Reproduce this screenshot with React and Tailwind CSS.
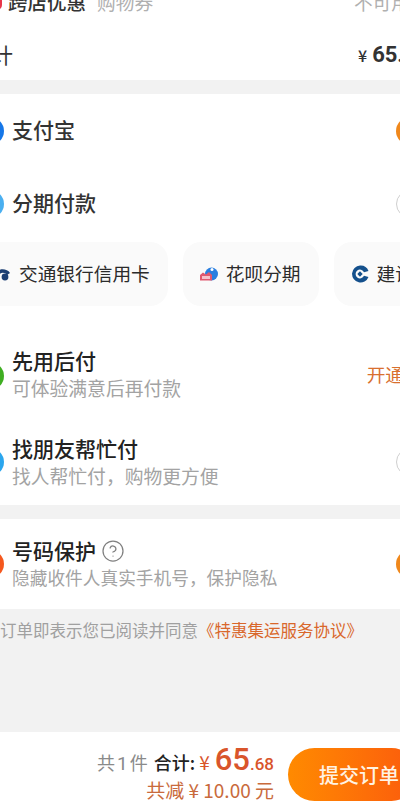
import { CircleHelp } from 'lucide-react'

const cjk = { fontFamily: '"Noto Sans CJK SC", "Noto Sans", sans-serif' }

function Dot({ className }) {
  return <div className={`w-[28px] h-[28px] rounded-full shrink-0 ${className}`} />
}

function Radio({ on }) {
  if (on) return <div className="w-[28px] h-[28px] rounded-full shrink-0 bg-[#f0881c]" />
  return <div className="w-[28px] h-[28px] rounded-full shrink-0 border-[1.5px] border-[#cfcfcf]" />
}

function PayRow({ icon, title }) {
  return (
    <div className="h-[73px] flex items-center gap-2">
      {icon}
      <div className="flex-1 -mt-[4px] text-[21px] leading-[28px] font-medium text-[#333]">{title}</div>
      <Radio on={title === '支付宝'} />
    </div>
  )
}

function DescRow({ icon, title, desc, right, height = 'h-[87px]', lift = '', descSize = 'text-[18.8px]' }) {
  return (
    <div className={`${height} flex items-center gap-2`}>
      {icon}
      <div className={`flex-1 ${lift}`}>
        <div className="flex items-center gap-[5px] text-[21px] leading-[27px] font-medium text-[#222]">
          {title}
          {title === '号码保护' && <CircleHelp size={24} strokeWidth={1.25} className="text-[#808080]" />}
        </div>
        <div className={`${descSize} leading-[27px] text-[#a3a3a3]`}>{desc}</div>
      </div>
      {right}
    </div>
  )
}

function Chip({ icon, label }) {
  return (
    <div className="h-[64px] rounded-[18px] bg-[#fafafa] flex items-center gap-2 pl-[17px] pr-[18px] shrink-0">
      {icon}
      <span className="-mt-[2px] text-[18.7px] text-[#2b2b2b] whitespace-nowrap">{label}</span>
    </div>
  )
}

function BocomIcon() {
  return (
    <svg width="18" height="18" viewBox="0 0 18 18" className="shrink-0">
      <path d="M2 9 C4 3 14 3 17 8 L14 10 C12 7 7 7 5 11 Z" fill="#1c3f73" />
      <circle cx="12" cy="12" r="3.4" fill="#1c3f73" />
    </svg>
  )
}

function HuabeiIcon() {
  return (
    <svg width="18" height="18" viewBox="0 0 18 18" className="shrink-0">
      <circle cx="11.5" cy="9" r="6.5" fill="#2a7fe0" />
      <circle cx="12" cy="4.5" r="1.5" fill="#fff" />
      <path d="M0 10 L3 7.5 L6 9.5 L9 7 L12 10 V15.5 H0 Z" fill="#e0596f" />
      <rect x="2" y="11" width="8" height="3" fill="#f6c3cc" />
    </svg>
  )
}

function CcbIcon() {
  return (
    <svg width="18" height="18" viewBox="0 0 18 18" className="shrink-0">
      <path d="M9 0.5 A8.5 8.5 0 1 0 17.5 12 L13 10.8 A4.4 4.4 0 1 1 13 7.2 L17.5 6 A8.5 8.5 0 0 0 9 0.5 Z" fill="#14508c" />
      <path d="M9 6.3 L11.7 9 L9 11.7 L6.3 9 Z" fill="#14508c" />
    </svg>
  )
}

export default function App() {
  return (
    <div className="w-[400px] h-[806px] overflow-hidden bg-[#f2f2f2] flex flex-col" style={cjk}>
      <div className="w-[448px] -ml-[24px] flex-1 flex flex-col">
        {/* order summary, cut off by the top of the screen */}
        <div className="bg-white -mt-[23px]">
          <div className="h-[52px] flex items-center">
            <div className="ml-[16px] w-[10px] h-[14px] rounded-full bg-[#e8364a] shrink-0" />
            <span className="ml-[6px] -mt-[2px] text-[19.5px] font-medium text-[#333]">跨店优惠</span>
            <span className="ml-[11px] -mt-[2px] text-[18.7px] text-[#b0b0b0]">购物券</span>
            <span className="ml-auto -mt-[2px] pr-[14px] text-[18.7px] text-[#b0b0b0]">不可用</span>
          </div>
          <div className="h-[51px] flex items-center justify-between">
            <span className="ml-[-5px] text-[21px] text-[#333]">小计</span>
            <span className="mr-[-5px] font-medium text-[#333]">
              <span className="text-[16px] mr-[5px]">¥</span>
              <span className="text-[22px] font-bold" style={{ fontFamily: 'Roboto, sans-serif' }}>65.68</span>
            </span>
          </div>
        </div>

        {/* payment methods */}
        <div className="bg-white mt-[14px]">
          <PayRow icon={<Dot className="bg-[#1677e8]" />} title="支付宝" />
          <PayRow icon={<Dot className="bg-[#4aaff0]" />} title="分期付款" />
          <div className="flex gap-[15px] mt-[2px] mb-[26px]">
            <Chip icon={<BocomIcon />} label="交通银行信用卡" />
            <Chip icon={<HuabeiIcon />} label="花呗分期" />
            <Chip icon={<CcbIcon />} label="建设银行" />
          </div>
          <DescRow
            icon={<Dot className="bg-[#3fae22]" />}
            title="先用后付"
            desc="可体验满意后再付款"
            lift="-mt-[3px]"
            right={<span className="-mt-[2px] text-[18.7px] text-[#d9702f] pr-[20px] whitespace-nowrap">开通</span>}
          />
          <DescRow
            icon={<Dot className="bg-[#2ba6ee]" />}
            title="找朋友帮忙付"
            desc={'找人帮忙付\uFF0C购物更方便'}
            right={<Radio />}
            height="h-[86px]"
          />
        </div>

        {/* number protection */}
        <div className="bg-white mt-[14px]">
          <DescRow
            icon={<Dot className="bg-[#f5581e]" />}
            title="号码保护"
            desc={'隐藏收件人真实手机号\uFF0C保护隐私'}
            descSize="text-[17.7px]"
            right={<Radio on />}
            height="h-[90px]"
          />
        </div>

        <div className="h-[42px] flex items-center -ml-[9px] text-[16.5px] text-[#a0a0a0] whitespace-nowrap">
          提交订单即表示您已阅读并同意
          <span className="text-[#d9672b]">《特惠集运服务协议》</span>
        </div>
      </div>

      {/* bottom bar */}
      <div className="h-[74px] bg-white flex items-center shrink-0 pl-[90px] pt-[11px]">
        <div className="w-[184px] flex flex-col items-end shrink-0 -mt-[5px]">
          <div className="h-[36px] flex items-baseline whitespace-nowrap">
            <span className="text-[18px] text-[#8a8a8a]">共</span>
            <span className="text-[19px] text-[#8a8a8a] mx-[2px]" style={{ fontFamily: 'Roboto, sans-serif' }}>1</span>
            <span className="text-[18px] text-[#8a8a8a]">件</span>
            <span className="text-[18px] font-medium text-[#222] ml-[6px]">合计:</span>
            <span className="text-[19px] text-[#d9552b] ml-[4px] mr-[5px]">¥</span>
            <span className="text-[31px] leading-[36px] font-medium text-[#d9552b]" style={{ fontFamily: 'Roboto, sans-serif' }}>65</span>
            <span className="text-[17px] font-medium text-[#d9552b]" style={{ fontFamily: 'Roboto, sans-serif' }}>.68</span>
          </div>
          <div className="text-[19px] leading-[24px] text-[#c96a3c] whitespace-nowrap">共减 ¥ 10.00 元</div>
        </div>
        <div className="ml-[14px] w-[130px] h-[53px] shrink-0 rounded-full bg-gradient-to-r from-[#ff8a00] to-[#fb5a0c] flex items-center pl-[31px] text-[20px] font-medium text-[#fff3e4] whitespace-nowrap">
          提交订单
        </div>
      </div>
    </div>
  )
}
